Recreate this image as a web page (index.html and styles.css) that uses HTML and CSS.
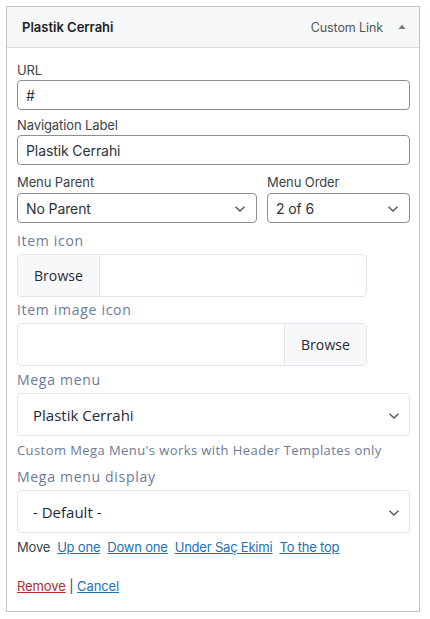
FILE: index.html
```html
<!DOCTYPE html>
<html>
<head>
<meta charset="utf-8">
<link rel="stylesheet" href="styles.css">
</head>
<body>
<div class="item">
  <div class="item-bar">
    <span class="item-title">Plastik Cerrahi</span>
    <span class="item-controls">
      <span class="item-type">Custom Link</span>
      <svg class="toggle" width="10" height="10" viewBox="0 0 10 10"><path d="M1.5 7 L5 2.5 L8.5 7 Z" fill="#787c82"/></svg>
    </span>
  </div>
  <div class="settings">
    <label class="wp-label first">URL</label>
    <input class="wp-input" type="text" value="#">

    <label class="wp-label">Navigation Label</label>
    <input class="wp-input" type="text" value="Plastik Cerrahi">

    <div class="row">
      <div class="col-parent">
        <label class="wp-label">Menu Parent</label>
        <div class="wp-select">
          <span>No Parent</span>
          <svg class="chev" width="12" height="8" viewBox="0 0 12 8"><path d="M1.5 1.8 L6 6 L10.5 1.8" fill="none" stroke="#50575e" stroke-width="1.4"/></svg>
        </div>
      </div>
      <div class="col-order">
        <label class="wp-label">Menu Order</label>
        <div class="wp-select">
          <span>2 of 6</span>
          <svg class="chev" width="12" height="8" viewBox="0 0 12 8"><path d="M1.5 1.8 L6 6 L10.5 1.8" fill="none" stroke="#50575e" stroke-width="1.4"/></svg>
        </div>
      </div>
    </div>

    <label class="p-label first-p">Item icon</label>
    <div class="browse">
      <span class="browse-btn left">Browse</span>
      <span class="browse-field"></span>
    </div>

    <label class="p-label">Item image icon</label>
    <div class="browse">
      <span class="browse-field"></span>
      <span class="browse-btn right">Browse</span>
    </div>

    <label class="p-label mega">Mega menu</label>
    <div class="p-select">
      <span>Plastik Cerrahi</span>
      <svg class="chev" width="12" height="8" viewBox="0 0 12 8"><path d="M1.5 1.8 L6 6 L10.5 1.8" fill="none" stroke="#50575e" stroke-width="1.4"/></svg>
    </div>
    <p class="p-note">Custom Mega Menu's works with Header Templates only</p>

    <label class="p-label tight">Mega menu display</label>
    <div class="p-select">
      <span>- Default -</span>
      <svg class="chev" width="12" height="8" viewBox="0 0 12 8"><path d="M1.5 1.8 L6 6 L10.5 1.8" fill="none" stroke="#50575e" stroke-width="1.4"/></svg>
    </div>

    <div class="move">
      <span>Move</span>
      <a href="#">Up one</a>
      <a href="#">Down one</a>
      <a href="#">Under Saç Ekimi</a>
      <a href="#">To the top</a>
    </div>

    <div class="actions">
      <a href="#" class="remove">Remove</a> <span class="sep">|</span> <a href="#" class="cancel">Cancel</a>
    </div>
  </div>
</div>
</body>
</html>
```
FILE: styles.css
```css
html, body {
  margin: 0;
  padding: 0;
  background: #ffffff;
}
body {
  padding: 6px;
  font-family: Inter, "Liberation Sans", sans-serif;
  font-size: 13px;
  color: #3c434a;
}
.item {
  width: 412px;
  border: 1px solid #c3c4c7;
  background: #fff;
}
.item-bar {
  height: 40px;
  background: #f6f7f7;
  border-bottom: 1px solid #dcdcde;
  display: flex;
  align-items: center;
  justify-content: space-between;
  padding: 0 12px 0 15px;
}
.item-title {
  font-weight: 600;
  font-size: 13px;
  color: #1d2327;
}
.item-controls {
  display: flex;
  align-items: center;
  gap: 14px;
  color: #50575e;
  font-size: 12.5px;
  letter-spacing: -0.1px;
}
.toggle { display: block; }
.settings {
  padding: 13px 9px 16px 10px;
  letter-spacing: -0.1px;
}
.wp-label {
  display: block;
  line-height: 18px;
  margin-top: 6px;
  margin-bottom: 1px;
  color: #3c434a;
}
.wp-label.first { margin-top: 0; }
.wp-input {
  display: block;
  box-sizing: border-box;
  width: 393px;
  height: 30px;
  margin: 0;
  border: 1px solid #8c8f94;
  border-radius: 4px;
  padding: 0 8px;
  font-family: inherit;
  font-size: 14px;
  letter-spacing: -0.1px;
  color: #2c3338;
  background: #fff;
}
.row {
  display: flex;
  gap: 10px;
  margin-top: 8px;
}
.row .wp-label { margin-top: 0; margin-bottom: 2px; }
.col-parent { width: 240px; }
.col-order { width: 143px; }
.wp-select {
  position: relative;
  box-sizing: border-box;
  height: 30px;
  border: 1px solid #8c8f94;
  border-radius: 4px;
  padding: 0 8px;
  display: flex;
  align-items: center;
  font-size: 14px;
  color: #2c3338;
}
.wp-select .chev {
  position: absolute;
  right: 10px;
  top: 11px;
}
.p-label {
  display: block;
  font-family: "Open Sans", "Noto Sans", sans-serif;
  font-size: 14px;
  line-height: 20px;
  letter-spacing: 0.7px;
  color: #6b7a99;
  margin-top: 3px;
  margin-bottom: 3px;
}
.p-label.first-p { margin-top: 8px; }
.p-label.mega { margin-top: 4px; }
.p-label.tight { margin-top: 7px; }
.browse {
  box-sizing: border-box;
  width: 350px;
  height: 43px;
  border: 1px solid #e2e5ec;
  border-radius: 4px;
  display: flex;
  overflow: hidden;
  font-family: "Open Sans", "Noto Sans", sans-serif;
  font-size: 14px;
  letter-spacing: 0.1px;
  color: #1e2a3b;
}
.browse-btn {
  width: 81px;
  background: #f7f8f9;
  display: flex;
  align-items: center;
  justify-content: center;
}
.browse-btn.left { border-right: 1px solid #e2e5ec; }
.browse-btn.right { border-left: 1px solid #e2e5ec; }
.browse-field { flex: 1; }
.p-select {
  position: relative;
  box-sizing: border-box;
  width: 393px;
  height: 43px;
  border: 1px solid #e2e5ec;
  border-radius: 4px;
  display: flex;
  align-items: center;
  padding: 0 15px;
  font-family: "Open Sans", "Noto Sans", sans-serif;
  font-size: 15px;
  letter-spacing: 0;
  color: #1e2a3b;
}
.p-select .chev {
  position: absolute;
  right: 9px;
  top: 18px;
}
.p-note {
  margin: 4px 0 0;
  font-family: "Open Sans", "Noto Sans", sans-serif;
  font-size: 13px;
  line-height: 20px;
  letter-spacing: 0.42px;
  color: #6b7a99;
}
.move {
  display: flex;
  gap: 7px;
  margin-top: 5px;
  line-height: 18px;
  letter-spacing: -0.2px;
  color: #3c434a;
}
.move a, .actions a {
  color: #2271b1;
  text-decoration: underline;
}
.actions {
  margin-top: 21px;
  line-height: 18px;
}
.actions .remove { color: #b32d2e; }
.sep { color: #3c434a; }
```
